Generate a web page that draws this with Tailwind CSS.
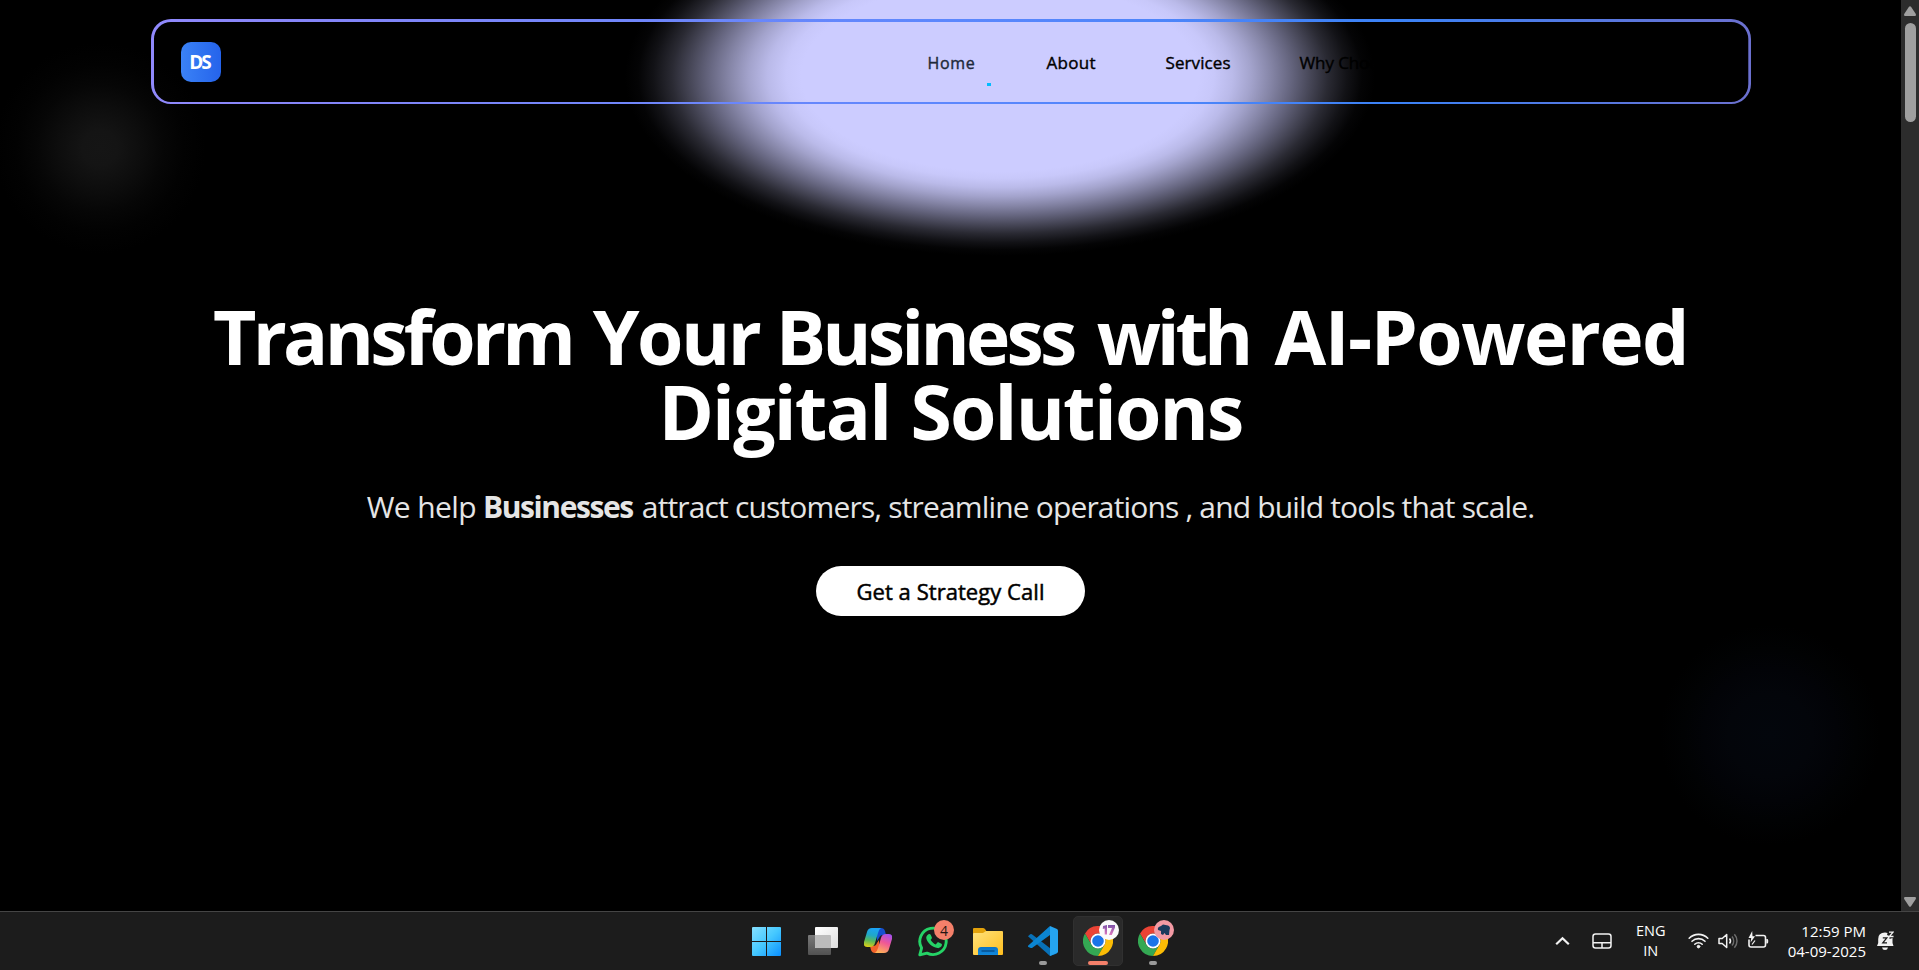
<!DOCTYPE html>
<html lang="en">
<head>
<meta charset="utf-8">
<title>Digital Solutions</title>
<script src="https://cdn.jsdelivr.net/npm/@tailwindcss/browser@4"></script>
</head>
<body class="h-[970px] w-[1919px] overflow-hidden bg-black font-['Open_Sans','Noto_Sans',sans-serif]">
<div class="flex h-full flex-col">
  <div class="flex h-[911px]">
    <main class="relative isolate flex w-[1901px] flex-col items-center overflow-hidden bg-black">
      <!-- background glows -->
      <div class="absolute -top-[104px] left-[625px] -z-10 h-[360px] w-[750px] bg-[radial-gradient(closest-side,#ccccff_0%,#ccccff_53%,#c8c8fa_57%,#babae9_62%,#a3a3cc_67%,#8484a5_72.5%,#666680_77.5%,#484859_82.5%,#2a2a33_87.5%,#121216_92.5%,#040405_96.5%,#000_100%)]"></div>
      <div class="absolute top-[38px] -left-[10px] -z-10 size-[220px] bg-[radial-gradient(closest-side,#151515_0%,#141414_16%,#0d0d0d_38%,#060606_58%,#020202_76%,#000_96%)]"></div>
      <div class="absolute top-[615px] left-[1650px] -z-10 size-[240px] bg-[radial-gradient(closest-side,#03060c_0%,#03050a_35%,#020307_55%,#010203_72%,#000_92%)]"></div>

      <header class="mt-[19px] h-[85px] w-[1600px] shrink-0">
        <div class="relative flex h-full items-center justify-between pl-[30px]">
          <svg class="absolute inset-0" width="1600" height="85" viewBox="0 0 1600 85" fill="none">
            <defs><linearGradient id="edge" x1="0" y1="0" x2="1600" y2="0" gradientUnits="userSpaceOnUse"><stop offset="0" stop-color="#9089fc"/><stop offset=".1" stop-color="#8585f8"/><stop offset=".5" stop-color="#5c87fd"/><stop offset=".78" stop-color="#3b82f6"/><stop offset="1" stop-color="#6b70cf"/></linearGradient></defs>
            <path fill="url(#edge)" fill-rule="evenodd" d="M20 0H1580A20 20 0 0 1 1600 20V65A20 20 0 0 1 1580 85H20A20 20 0 0 1 0 65V20A20 20 0 0 1 20 0ZM20 3A17 17 0 0 0 3 20V65A17 18 0 0 0 20 83H1580A17 18 0 0 0 1597.300 65V20A17 17 0 0 0 1580 3Z"/>
          </svg>
          <div class="mt-px flex size-10 items-center justify-center rounded-[10px] bg-linear-to-r from-[#3b82f6] to-[#2563eb] pr-0.5 text-[19px] font-bold tracking-[-1.9px] text-white">DS</div>
          <nav class="mt-0.5 flex w-[823px] items-center text-[17px] leading-6 text-black [-webkit-text-stroke:0.4px_currentColor]">
            <a class="relative w-[119px] text-base tracking-[0.7px] text-gray-800">Home<span class="absolute top-[32px] left-[59px] h-[3px] w-1 bg-sky-400"></span></a>
            <a class="w-[119px] tracking-[0.3px]">About</a>
            <a class="w-[134px] tracking-[0.1px]">Services</a>
            <a class="tracking-[-0.1px]">Why Choose Us</a>
          </nav>
        </div>
      </header>

      <section class="mt-[195px] flex flex-col items-center">
        <h1 class="text-center text-[75px] leading-[75px] font-bold tracking-[-1.5px] whitespace-nowrap text-white [word-spacing:2.5px]"><span class="tracking-[-3.7px]">Transform</span> <span class="tracking-[-2.5px]">Your</span> <span class="-ml-1 tracking-[-3.8px]">Business</span> <span class="ml-[3px] tracking-[-4.2px]">with</span> <span class="ml-[5px]">AI-Powered</span><br><span class="tracking-[-1.8px]">Digital Solutions</span></h1>
        <p class="mt-[35px] text-[30px] leading-[45px] tracking-[-0.84px] whitespace-nowrap text-neutral-200"><span class="tracking-[-0.6px]">We help</span> <b class="mr-0.5 font-bold tracking-[-1.4px]">Businesses</b> attract customers, streamline operations , and build tools that scale.</p>
        <a class="mt-[37px] flex h-[50px] w-[269px] items-center justify-center rounded-full bg-white text-[22px] tracking-[0.05px] text-black [-webkit-text-stroke:0.5px_currentColor]">Get a Strategy Call</a>
      </section>
    </main>
    <div class="flex w-[18px] flex-col items-center justify-between bg-[#2c2c2c] pt-1.5 pb-1">
      <div class="flex flex-col items-center gap-[7px]">
        <svg width="12" height="10" viewBox="0 0 12 10" fill="#9f9f9f"><path d="M5 .8Q6-.5 7 .8L11.800 8Q12.300 10 11 10H1Q-.3 10 .2 8Z"/></svg>
        <div class="h-[99px] w-[11px] rounded-full bg-[#9f9f9f]"></div>
      </div>
      <svg width="12" height="10" viewBox="0 0 12 10" fill="#9f9f9f"><path d="M5 9.200Q6 10.500 7 9.200L11.800 2Q12.300 0 11 0H1Q-.3 0 .2 2Z"/></svg>
    </div>
  </div>

  <footer class="flex h-[59px] border-t border-[#454545] bg-[#1c1c1c] font-['Open_Sans','Noto_Sans',sans-serif]">
    <div class="ml-[738px] flex w-[443px]">
      <div class="flex w-[57px] justify-center pt-[15px]">
        <svg width="29" height="29" viewBox="0 0 29 29"><defs><linearGradient id="win2" x1="0" y1="0" x2="29" y2="29" gradientUnits="userSpaceOnUse"><stop stop-color="#86e0ff"/><stop offset=".5" stop-color="#45c8ff"/><stop offset="1" stop-color="#0a8fff"/></linearGradient></defs><path fill="url(#win2)" d="M1 0h13v14H0V1Q0 0 1 0ZM15 0h13q1 0 1 1v13H15ZM0 15h14v14H1q-1 0-1-1ZM15 15h14v13q0 1-1 1H15Z"/></svg>
      </div>
      <div class="flex w-[55px] justify-center pt-[15px]">
        <svg width="30" height="29" viewBox="0 0 30 29"><defs><linearGradient id="tv" x1="0" y1="0" x2="1" y2="1"><stop stop-color="#fff"/><stop offset="1" stop-color="#dedede"/></linearGradient><linearGradient id="tv2" x1="0" y1="0" x2="0" y2="1"><stop stop-color="#7a7a7a"/><stop offset="1" stop-color="#515151"/></linearGradient></defs><rect y="8" width="23" height="20" rx="1" fill="url(#tv2)"/><rect x="7" width="23" height="21" rx="1" fill="url(#tv)"/><path d="M7 8h15q1 0 1 1v12H8q-1 0-1-1Z" fill="#bcbcbc"/></svg>
      </div>
      <div class="flex w-[55px] justify-center pt-4">
        <svg width="28" height="26" viewBox="0 0 28 26"><defs><linearGradient id="c1" x1="8" y1="0" x2="4" y2="20" gradientUnits="userSpaceOnUse"><stop stop-color="#1ba3f5"/><stop offset=".35" stop-color="#20a8c8"/><stop offset=".62" stop-color="#57b95b"/><stop offset="1" stop-color="#f3d20b"/></linearGradient><linearGradient id="c2" x1="24" y1="6" x2="16" y2="25" gradientUnits="userSpaceOnUse"><stop stop-color="#a550ee"/><stop offset=".45" stop-color="#ef5796"/><stop offset="1" stop-color="#ffb357"/></linearGradient></defs><path fill="#1550d0" d="M13 0h4q3 0 4 3l1 4h-3q-3 0-4 3l-2 3Z"/><path fill="#f2632b" d="M15 25h-4q-3 0-4-3l-1-4h3q3 0 4-3l2-3Z"/><path fill="url(#c1)" d="M8 0h9q-2 1-3 5l-3 10q-1 4-5 4H3q-4 0-3-5L3 4Q4 0 8 0Z"/><path fill="url(#c2)" d="M20 25h-9q2-1 3-5l3-10q1-4 5-4h3q4 0 3 5l-3 10q-1 4-5 4Z"/></svg>
      </div>
      <div class="relative flex w-[55px] justify-center pt-3.5 pl-0.5">
        <svg width="31" height="31" viewBox="0 0 31 31" fill="none"><path d="M1.800 28.800 3.600 22A13.200 13.200 0 1 1 9 27.100Z" stroke="#25d366" stroke-width="2.900" stroke-linejoin="round"/><path fill="#25d366" d="M10.500 8.200c.8-.5 1.800-.3 2.200.5l1.200 2.700c.3.800-.9 1.900-1.300 2.400 1.200 2.200 2.900 3.800 5.200 4.700l1.600-1.900c.5-.5 1-.4 1.500-.1l2.500 1.300c.7.400.6 1 .4 1.800-.5 1.700-2.500 2.700-4.200 2.500-5.800-1-10.300-5.200-11.300-9.800-.3-1.700.8-3.400 2.200-4.100Z"/></svg>
        <span class="absolute top-2 left-[29px] flex size-5 items-center justify-center rounded-full bg-[#f4806a] text-[14px] text-[#251512]">4</span>
      </div>
      <div class="flex w-[55px] justify-center pt-4">
        <svg width="30" height="28" viewBox="0 0 30 28"><defs><linearGradient id="fo" x1="0" y1="0" x2="1" y2="1"><stop stop-color="#ffe27c"/><stop offset="1" stop-color="#ffbe1e"/></linearGradient><linearGradient id="fb" x1="0" y1="0" x2="0" y2="1"><stop stop-color="#0a74c8"/><stop offset="1" stop-color="#1289dc"/></linearGradient></defs><path fill="#e3a20b" d="M0 1q0-1 1-1h9q1 0 2 1l2 3v4H0Z"/><path fill="url(#fo)" d="M0 6q0-1 1-1h9l3-2h16q1 0 1 1v22q0 1-1 1H1q-1 0-1-1Z"/><path fill="url(#fb)" d="M5 27v-5q0-3 3-3h14q3 0 3 3v5Z"/><path d="M8.500 23h13" stroke="#064c8a" stroke-width="1.400"/></svg>
      </div>
      <div class="relative flex w-[55px] justify-center pt-3.5">
        <svg width="30" height="30" viewBox="0 0 30 30"><path fill="#0871b8" d="M0 10.200 2.200 8.200q.8-.6 1.700 0L29 27.500 22 30Z"/><path fill="#0b85d2" d="M0 19.800 22 0v9L4 21.900q-.9.500-1.800-.2L.3 21q-.6-.6-.3-1.200Z"/><path fill="#25a4f0" d="M22 0l7 3q1 .5 1 1.500v21q0 1-1 1.500l-7 3V0Z"/></svg>
        <span class="absolute bottom-[5px] left-[24px] h-1 w-2 rounded-full bg-[#9a9a9a]"></span>
      </div>
      <div class="relative flex w-[55px] justify-center pt-3.5">
        <span class="absolute top-1 left-[3px] h-[50px] w-[50px] rounded-[5px] border border-[#303030] bg-[#2a2a2a]"></span>
        <svg class="relative" width="30" height="30" viewBox="0 0 30 30"><g id="chrome"><path fill="#ea4335" d="M2 7.500A15 15 0 0 1 28 7.500H15A7.500 7.500 0 0 0 8.500 18.700Z"/><path fill="#34a853" d="M2 7.500A15 15 0 0 0 15 30L21.500 18.700A7.500 7.500 0 0 1 8.500 18.700Z"/><path fill="#fbbc05" d="M28 7.500A15 15 0 0 1 15 30L21.500 18.700A7.500 7.500 0 0 0 15 7.500Z"/><circle cx="15" cy="15" r="7.500" fill="#fff"/><circle cx="15" cy="15" r="5.800" fill="#1a73e8"/></g></svg>
        <span class="absolute top-2 left-[29px] flex size-5 items-center justify-center rounded-full bg-[#fafafa]"><svg width="14" height="12" viewBox="0 0 14 12" fill="none"><defs><linearGradient id="n17" x1="0" y1="0" x2="0" y2="1"><stop stop-color="#7c52a8"/><stop offset="1" stop-color="#e07ac0"/></linearGradient></defs><path fill="url(#n17)" d="M1 2 5 1v9.500H2.700V4.500L.8 5ZM6 1h7v2.500L9.800 11H7L10 4H6Z"/></svg></span>
        <span class="absolute bottom-[5px] left-[18px] h-1 w-5 rounded-full bg-[#f4806a]"></span>
      </div>
      <div class="relative flex w-[55px] justify-center pt-3.5">
        <svg width="30" height="30" viewBox="0 0 30 30"><use href="#chrome"/></svg>
        <span class="absolute top-2 left-[29px] flex size-5 items-center justify-center rounded-full bg-[#f39aa4]"><svg width="14" height="12" viewBox="0 0 14 12" fill="#1b3a5c"><path d="M1 6Q0 3 4 2L6 .5 11 1.500Q14 3 12.500 6L12 11H9L7.500 9 6 11 4 10V7Z"/></svg></span>
        <span class="absolute bottom-[5px] left-[24px] h-1 w-2 rounded-full bg-[#9a9a9a]"></span>
      </div>
    </div>

    <div class="ml-auto flex pr-[25px] text-[14px] leading-5 text-white">
      <svg class="mt-6 mr-[22px]" width="15" height="10" viewBox="0 0 15 10" fill="none" stroke="#f2f2f2" stroke-width="2.200"><path d="m1.200 8.200 6.300-6 6.300 6"/></svg>
      <svg class="mt-[21px] mr-[24px]" width="20" height="16" viewBox="0 0 20 16" fill="none" stroke="#f2f2f2" stroke-width="1.500"><rect x="1" y="1" width="18" height="14" rx="2.500"/><path d="M1 9.800h18M10 9.800V15"/></svg>
      <div class="mr-[22px] w-[30px] pt-[9px] text-center text-[14.500px] tracking-[-0.1px]">ENG<br>IN</div>
      <svg class="mt-[20px] mr-[9px]" width="21" height="17" viewBox="0 0 21 17" fill="none" stroke="#f2f2f2" stroke-width="1.600" stroke-linecap="round"><path d="M1.200 6.200a13.300 13.300 0 0 1 18.600 0M4 9.300a9.300 9.300 0 0 1 13 0M6.800 12.200a5.300 5.300 0 0 1 7.400 0"/><circle cx="10.500" cy="14.600" r="1.300" fill="#f2f2f2" stroke-width="1"/></svg>
      <svg class="mt-[20px] mr-[9px]" width="21" height="18" viewBox="0 0 21 18" fill="none" stroke="#f2f2f2" stroke-width="1.500" stroke-linejoin="round"><path d="M1 6.500v5h3.200L8.700 15.500v-13L4.200 6.500Z"/><path d="M11.500 6.500a4 4 0 0 1 0 5"/><path stroke="#6c6c6c" d="M14 4.500a7 7 0 0 1 0 9M16.400 2.300a10 10 0 0 1 0 13.400"/></svg>
      <svg class="mt-[19px] mr-[19px]" width="21" height="18" viewBox="0 0 21 18" fill="none" stroke="#f2f2f2" stroke-width="1.600"><path d="M7.500 4.500h8q2 0 2 2V14q0 2-2 2H3q-2 0-2-2V8.500"/><path fill="#f2f2f2" stroke="none" d="M18.300 8H19q1.200 0 1.200 1.200v2q0 1.200-1.200 1.200h-.7ZM4.200 0 .5 7h2.700L2.600 11.500 7 5.300H4.500Z"/><path d="m4 13.500 3-4" stroke-width="1.200"/></svg>
      <div class="mr-[11px] pt-[9px] text-right text-[15px] whitespace-nowrap">12:59 PM<br>04-09-2025</div>
      <svg class="mt-[19px]" width="17" height="20" viewBox="0 0 17 20" fill="#f2f2f2"><path d="M8 1.500q1.500 0 2.500.5L10 4l2.500 1v3l3-1V12l1 3H0l1.200-3V8q0-6.500 6.800-6.500ZM5 16.500h6q-.5 2.500-3 2.500t-3-2.500Z"/><path d="M5.800 6.800h4l-4 5h4.200" fill="none" stroke="#1c1c1c" stroke-width="1.300"/><path d="M12 1.200h4L12.300 5.500H16.500" fill="none" stroke="#f2f2f2" stroke-width="1.300"/></svg>
    </div>
  </footer>
</div>
</body>
</html>
